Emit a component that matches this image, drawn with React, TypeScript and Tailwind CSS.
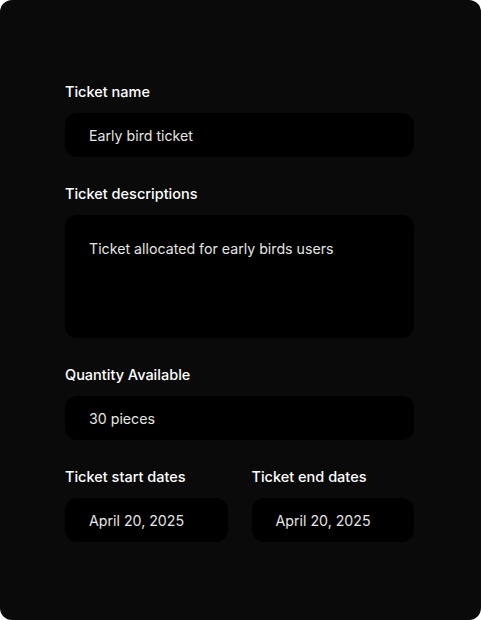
function Field({ label, value, tall = false }: { label: string; value: string; tall?: boolean }) {
  return (
    <div className="flex flex-col gap-[11px]">
      <div className="text-[14.5px] font-medium leading-[21px] text-white">{label}</div>
      <div
        className={
          tall
            ? "h-[123px] rounded-xl bg-black px-6 pt-6 text-[14.2px] leading-5 text-neutral-200"
            : "flex h-11 items-center rounded-xl bg-black px-6 pt-0.5 text-[14.2px] leading-5 text-neutral-200"
        }
      >
        {value}
      </div>
    </div>
  );
}

export default function App() {
  return (
    <div className="min-h-screen bg-white font-['Inter',sans-serif]">
      <div className="h-[620px] w-[481px] rounded-xl bg-[#0a0a0a] pl-[65px] pr-[67px] pt-[81px]">
        <div className="flex flex-col gap-[26px]">
          <Field label="Ticket name" value="Early bird ticket" />
          <Field label="Ticket descriptions" value="Ticket allocated for early birds users" tall />
          <Field label="Quantity Available" value="30 pieces" />
          <div className="grid grid-cols-2 gap-6">
            <Field label="Ticket start dates" value="April 20, 2025" />
            <Field label="Ticket end dates" value="April 20, 2025" />
          </div>
        </div>
      </div>
    </div>
  );
}
